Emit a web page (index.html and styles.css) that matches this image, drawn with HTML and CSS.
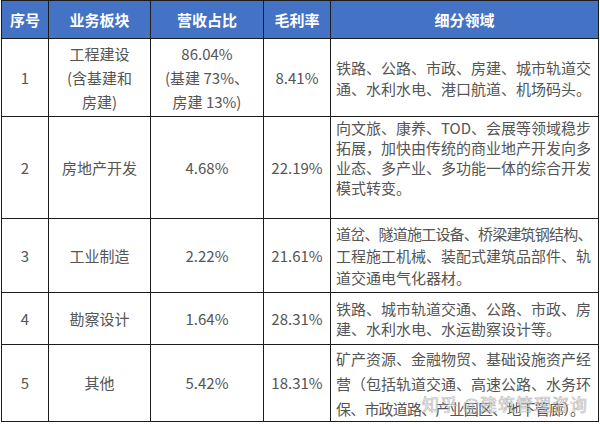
FILE: index.html
```html
<!DOCTYPE html>
<html lang="zh-CN">
<head>
<meta charset="utf-8">
<title>业务板块</title>
<link rel="stylesheet" href="styles.css">
</head>
<body>
<div class="wrap">
<table class="tbl">
  <colgroup>
    <col class="c1"><col class="c2"><col class="c3"><col class="c4"><col class="c5">
  </colgroup>
  <thead>
    <tr class="head">
      <th>序号</th><th>业务板块</th><th>营收占比</th><th>毛利率</th><th>细分领域</th>
    </tr>
  </thead>
  <tbody>
    <tr class="r1">
      <td>1</td>
      <td>工程建设<br>(含基建和<br>房建)</td>
      <td>86.04%<br>(基建 73%、<br>房建 13%)</td>
      <td>8.41%</td>
      <td class="desc"><span class="ln">铁路、公路、市政、房建、城市轨道交</span><span class="ln">通、水利水电、港口航道、机场码头。</span></td>
    </tr>
    <tr class="r2">
      <td>2</td>
      <td>房地产开发</td>
      <td>4.68%</td>
      <td>22.19%</td>
      <td class="desc"><span class="ln">向文旅、康养、TOD、会展等领域稳步</span><span class="ln">拓展，加快由传统的商业地产开发向多</span><span class="ln">业态、多产业、多功能一体的综合开发</span><span class="ln">模式转变。</span></td>
    </tr>
    <tr class="r3">
      <td>3</td>
      <td>工业制造</td>
      <td>2.22%</td>
      <td>21.61%</td>
      <td class="desc"><span class="ln tight">道岔、隧道施工设备、桥梁建筑钢结构、</span><span class="ln">工程施工机械、装配式建筑品部件、轨</span><span class="ln">道交通电气化器材。</span></td>
    </tr>
    <tr class="r4">
      <td>4</td>
      <td>勘察设计</td>
      <td>1.64%</td>
      <td>28.31%</td>
      <td class="desc"><span class="ln">铁路、城市轨道交通、公路、市政、房</span><span class="ln">建、水利水电、水运勘察设计等。</span></td>
    </tr>
    <tr class="r5">
      <td>5</td>
      <td>其他</td>
      <td>5.42%</td>
      <td>18.31%</td>
      <td class="desc"><span class="ln">矿产资源、金融物贸、基础设施资产经</span><span class="ln">营（包括轨道交通、高速公路、水务环</span><span class="ln tight">保、市政道路、产业园区、地下管廊）。</span></td>
    </tr>
  </tbody>
</table>
<div class="mark">知乎 @建筑管理咨询</div>
</div>
</body>
</html>
```
FILE: styles.css
```css
html, body {
  margin: 0;
  padding: 0;
  background: #ffffff;
}
body {
  font-family: "Noto Sans CJK SC", "Microsoft YaHei", sans-serif;
  color: #555555;
}
.wrap {
  position: relative;
  width: 597px;
  padding: 0 0 0 1px;
}
.tbl {
  border-collapse: collapse;
  width: 597px;
  table-layout: fixed;
  font-size: 15px;
}
.c1 { width: 47px; }
.c2 { width: 102px; }
.c3 { width: 113px; }
.c4 { width: 67px; }
.c5 { width: 268px; }
.tbl th, .tbl td {
  border: 1px solid #1c1c1c;
  padding: 0;
  text-align: center;
  vertical-align: middle;
}
.head th {
  background: #4472c4;
  color: #ffffff;
  font-weight: bold;
  height: 37px;
  font-size: 15px;
}
.tbl td {
  line-height: 22px;
}
.tbl td.desc {
  text-align: left;
  padding: 0 2px 0 5px;
}
.ln {
  display: block;
  white-space: nowrap;
}
.ln.tight {
  letter-spacing: -0.8px;
}
.r1 td { height: 77px; line-height: 24px; }
.r1 td.desc { line-height: 21px; }
.r2 td { height: 100px; }
.r2 td.desc { line-height: 20px; vertical-align: top; padding-top: 1px; }
.r3 td { height: 73px; }
.r4 td { height: 51px; }
.r4 td.desc { line-height: 20px; }
.r5 td { height: 76px; }
.r5 td.desc { line-height: 25px; }
.mark {
  position: absolute;
  left: 422px;
  top: 391px;
  font-size: 17px;
  color: rgba(255, 255, 255, 0.6);
  -webkit-text-stroke: 0.7px rgba(110, 110, 110, 0.5);
  letter-spacing: 1px;
  white-space: nowrap;
}
```
